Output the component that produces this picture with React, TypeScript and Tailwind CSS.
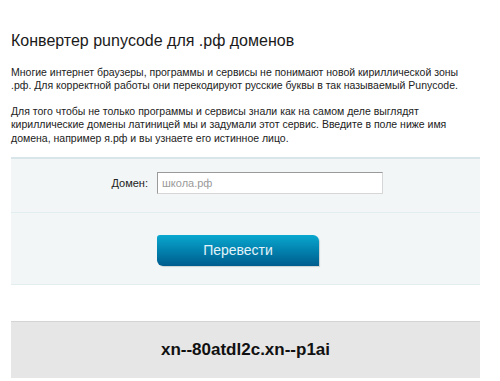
export default function App() {
  return (
    <div className="min-h-[381px] bg-white font-['Liberation_Sans',Arial,sans-serif] text-[#222]">
      <div className="ml-[11px] w-[469px] pt-[31px]">
        <h1 className="text-[16px] leading-[20px] font-normal text-[#1a1a1a]">
          Конвертер punycode для .рф доменов
        </h1>

        <p className="mt-[15px] text-[10.5px] leading-[13.4px] text-[#222]">
          Многие интернет браузеры, программы и сервисы не понимают новой кириллической зоны .рф. Для корректной
          работы они перекодируют русские буквы в так называемый Punycode.
        </p>
        <p className="mt-[12px] pr-[20px] text-[10.5px] leading-[13.4px] text-[#222]">
          Для того чтобы не только программы и сервисы знали как на самом деле выглядят кириллические домены
          латиницей мы и задумали этот сервис. Введите в поле ниже имя домена, например я.рф и вы узнаете его
          истинное лицо.
        </p>

        <form className="mt-[12px] border-t-2 border-b border-t-[#d8e6ea] border-b-[#e2edf0] bg-[#f3f6f7]">
          <div className="flex items-center border-b border-[#e2edf0] pt-[13px] pb-[18px]">
            <label className="w-[146px] pr-[9px] text-right text-[11px] text-[#222]">Домен:</label>
            <input
              type="text"
              placeholder="школа.рф"
              className="h-[22px] w-[226px] border border-t-[#9a9a9a] border-l-[#9a9a9a] border-r-[#d6d6d6] border-b-[#d6d6d6] bg-white px-[4px] text-[11px] outline-none placeholder:text-[#9a9a9a]"
            />
          </div>
          <div className="pt-[22px] pb-[18px] pl-[146px]">
            <button
              type="button"
              className="h-[31px] w-[162px] rounded-tl-[3px] rounded-tr-[6px] rounded-bl-[6px] rounded-br-none bg-gradient-to-b from-[#0aa8cf] to-[#005d8e] text-[14px] text-[#e4f3f9] shadow-[1px_1px_1px_rgba(0,0,0,0.15)]"
            >
              Перевести
            </button>
          </div>
        </form>

        <div className="mt-[36px] flex h-[57px] items-center justify-center border-t border-[#d4d4d4] bg-[#e6e6e6]">
          <span className="text-[17px] font-bold text-[#111]">xn--80atdl2c.xn--p1ai</span>
        </div>
      </div>
    </div>
  )
}
